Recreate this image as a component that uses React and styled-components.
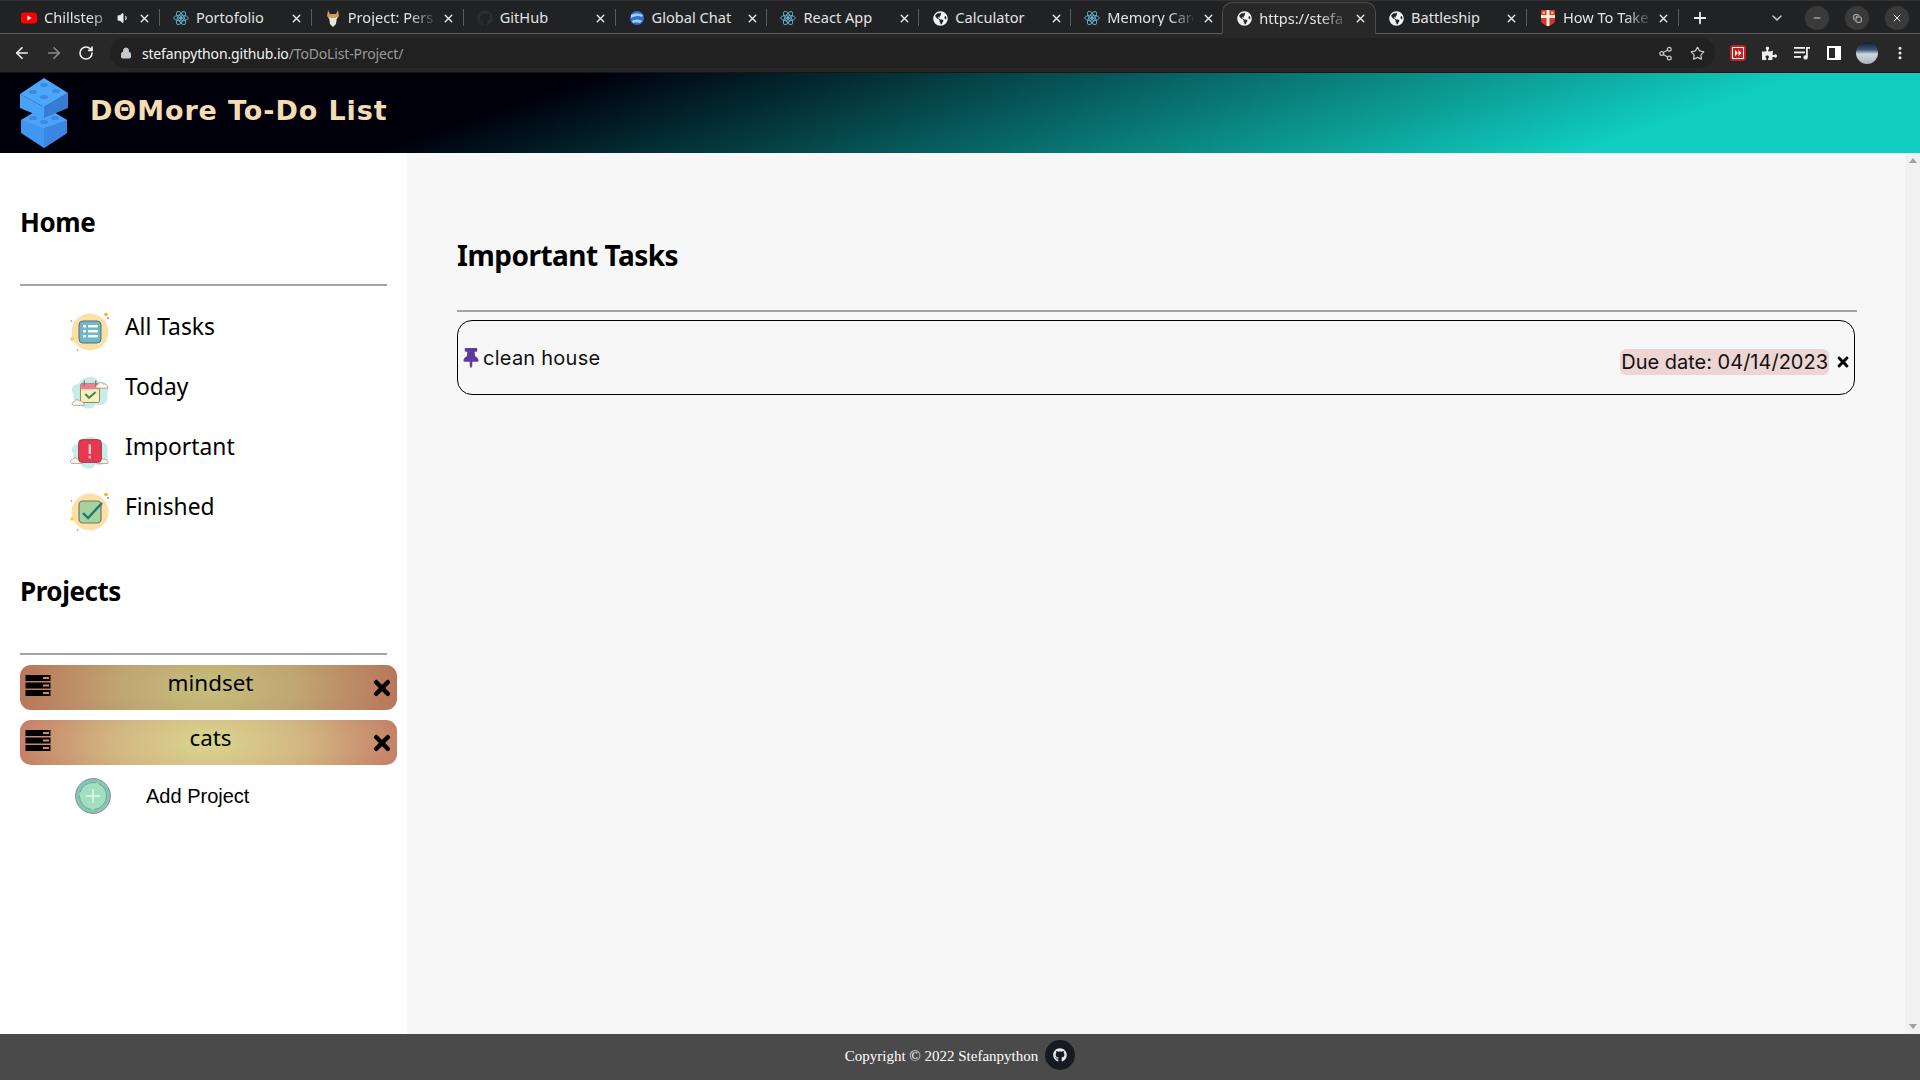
import React from "react";
import styled, { createGlobalStyle } from "styled-components";
import { ArrowLeft, ArrowRight, RotateCw, Lock, Share2, Star, MoreVertical, Minus, Plus, X, ChevronDown, Volume1, Copy } from "lucide-react";
import { FaTimes, FaThumbtack, FaGithub, FaGlobeAmericas, FaPuzzlePiece } from "react-icons/fa";

const Global = createGlobalStyle`
  html, body { margin: 0; padding: 0; height: 100%; overflow: hidden; }
  body { font-family: "Noto Sans", sans-serif; background: #fff; }
  #root { height: 100%; }
  * { box-sizing: border-box; }
`;

const Page = styled.div`
  width: 1920px; height: 1080px; display: flex; flex-direction: column;
`;
const TabStrip = styled.div`
  height: 34px; flex: none; display: flex; align-items: stretch; background: #212223;
  padding-left: 8px; padding-top: 2px; border-top: 1px solid #333; border-bottom: 1px solid #5b5b5b; color: #e4e4e4;
`;
const Tab = styled.div`
  width: 151.9px; position: relative; display: flex; align-items: center; padding: 0 7px 0 13px; gap: 7px;
  ${p => p.$active ? `
    background: #282828; border-radius: 9px 9px 0 0; margin-bottom: -1px;
    box-shadow: 0 0 0 1px #4c4c4c; clip-path: inset(-2px -2px 0 -2px);
  ` : `
    &::after { content: ""; position: absolute; right: 0; top: 6px; bottom: 7px; width: 1px; background: ${p.$noSep ? "transparent" : "#5c5c5c"}; }
  `}
`;
const Favicon = styled.span`
  width: 16px; height: 16px; flex: none; display: flex; align-items: center; justify-content: center;
`;
const TabTitle = styled.span`
  flex: 1; min-width: 0; white-space: nowrap; font: 14.6px/18px "Noto Sans", sans-serif; color: #e3e3e3; margin-bottom: 2px;
  ${p => p.$fade && `mask-image: linear-gradient(to right, #000 72%, rgba(0,0,0,0.15) 100%); width: min-content; flex: 1 1 auto;`}
`;
const TabClose = styled.span`
  width: 16px; height: 16px; flex: none; display: flex; align-items: center; justify-content: center; color: #eee;
`;
const StripRight = styled.div`
  flex: 1; display: flex; align-items: center; position: relative; color: #eee; padding: 0 11px 0 12px;
`;
const ChevronSlot = styled.span`
  display: flex; margin-left: auto; margin-right: 4px; color: #d8d8d8;
`;
const WinButton = styled.span`
  width: 24px; height: 24px; margin-left: 16px; border-radius: 50%; background: #3a3a3a; display: flex; align-items: center; justify-content: center; color: #eee;
`;
const Toolbar = styled.div`
  height: 39px; flex: none; background: #282828; display: flex; align-items: center; padding: 0 10px 0 12px; border-bottom: 1px solid #151515;
`;
const NavButton = styled.span`
  width: 20px; height: 20px; margin-right: 12px; display: flex; align-items: center; justify-content: center; color: ${p => p.$off ? "#8a8a8a" : "#f0f0f0"};
`;
const Omnibox = styled.div`
  margin-left: 2px; width: 1607px; height: 30px; border-radius: 15px; background: #212121; display: flex; align-items: center; padding: 0 10px 0 10px; color: #c8c8c8;
`;
const UrlText = styled.span`
  margin-left: 10px; font: 14px "Noto Sans", sans-serif; color: #f1f1f1; letter-spacing: -0.15px;
`;
const UrlPath = styled.span`
  color: #9a9a9a;
`;
const OmniActions = styled.span`
  margin-left: auto; display: flex; gap: 17px; color: #c6c6c6;
`;
const ExtTray = styled.div`
  display: flex; align-items: center; gap: 12px; margin-left: 13px; color: #eee;
`;
const ExtSlot = styled.span`
  width: 20px; height: 20px; display: flex; align-items: center; justify-content: center;
`;
const Avatar = styled.span`
  width: 22px; height: 22px; border-radius: 50%; background: linear-gradient(#131a2c 0%, #3c5578 35%, #cfd6de 55%, #aab2ba 100%);
`;
const AppHeader = styled.header`
  height: 80px; flex: none; display: flex; align-items: center; padding-left: 20px; gap: 22px;
  background: linear-gradient(161deg, #00000c 28%, #10cdc0 84%);
`;
const AppTitle = styled.h1`
  margin: 0 0 5px; font: bold 27px "DejaVu Sans", sans-serif; color: #f6dcb2; letter-spacing: 0.9px; white-space: nowrap;
`;
const Content = styled.div`
  flex: 1; min-height: 0; display: flex;
`;
const Sidebar = styled.aside`
  width: 407px; flex: none; background: #fff; padding-left: 20px; padding-right: 10px;
`;
const SectionTitle = styled.h2`
  margin: ${p => p.$top}px 0 44px; font: 700 26px/36px "Noto Sans", sans-serif; color: #000; letter-spacing: -0.45px;
`;
const Rule = styled.hr`
  margin: 0; border: 0; height: 2px; background: #a3a3a3; width: ${p => p.$w}px;
`;
const NavList = styled.div`
  display: flex; flex-direction: column; padding-top: 16px;
`;
const NavRow = styled.div`
  height: 60px; display: flex; align-items: center; padding-left: 50px; gap: 15px;
`;
const NavIcon = styled.span`
  width: 40px; height: 40px; flex: none; display: flex;
`;
const NavLabel = styled.span`
  font: 22.8px/32px "Noto Sans", sans-serif; color: #000; padding-bottom: 10px;
`;
const ProjectList = styled.div`
  display: flex; flex-direction: column; gap: 10px; margin-top: 10px;
`;
const ProjectCard = styled.div`
  height: 45px; position: relative; border-radius: 11px; display: flex; align-items: center; padding: 0 5px;
  background: ${p => p.$dark
    ? "radial-gradient(ellipse 52% 190% at 50% 50%, #c6c07c 0%, #c0a672 45%, #b8745a 100%)"
    : "radial-gradient(ellipse 52% 190% at 50% 50%, #dad68e 0%, #d2b581 50%, #c47e65 100%)"};
`;
const ProjectIcon = styled.span`
  width: 26px; height: 22px; flex: none; display: flex; margin-bottom: 3px;
`;
const ProjectName = styled.span`
  flex: 1; text-align: center; font: 22.4px/32px "Noto Sans", sans-serif; color: #000; padding-bottom: 9px;
`;
const ProjectDelete = styled.span`
  width: 24px; display: flex; justify-content: center; color: #000; font-size: 24px; margin-top: 1px; margin-right: -2px;
`;
const AddRow = styled.div`
  display: flex; align-items: center; padding-left: 55px; gap: 35px; margin-top: 13px;
`;
const AddLabel = styled.span`
  font: 20px "Liberation Sans", sans-serif; color: #000;
`;
const Main = styled.main`
  flex: 1; min-width: 0; background: #f7f7f7; padding: 0 48px 0 50px;
`;
const PageTitle = styled.h2`
  margin: 82px 0 35px; font: 700 28px/40px "Noto Sans", sans-serif; color: #000; letter-spacing: -0.5px;
`;
const TaskCard = styled.div`
  margin-top: 8px; width: 1398px; height: 75px; border: 1.5px solid #000; border-radius: 15px; display: flex; align-items: center; padding: 0 3px 0 3px;
`;
const TaskPin = styled.span`
  color: #5f3a9e; font-size: 20px; display: flex;
`;
const TaskName = styled.span`
  font: 20px "Inter", sans-serif; letter-spacing: 0.25px; color: #111; margin-left: 2px; margin-top: 1px;
`;
const DueDate = styled.span`
  margin-left: auto; height: 26px; padding: 0 1px; background: #ecd5d3; border-radius: 6px; font: 20px/26px "Inter", sans-serif; color: #111; margin-top: 8px;
`;
const TaskDelete = styled.span`
  display: flex; margin-left: 6px; color: #000; font-size: 16px; margin-top: 8px;
`;
const Scrollbar = styled.div`
  width: 15px; flex: none; background: #f1f1f1; display: flex; flex-direction: column; justify-content: space-between; align-items: center; padding: 5px 0;
`;
const ScrollArrow = styled.span`
  width: 0; height: 0; border-left: 4px solid transparent; border-right: 4px solid transparent;
  ${p => p.$down ? "border-top: 5px solid #a0a0a0;" : "border-bottom: 5px solid #a0a0a0;"}
`;
const Footer = styled.footer`
  height: 46px; flex: none; background: #4a4a4a; display: flex; align-items: center; justify-content: center; gap: 7px;
`;
const FooterText = styled.span`
  font: 15px "Liberation Serif", serif; color: #fff; margin-bottom: 1px;
`;
const FooterBadge = styled.span`
  width: 30px; height: 30px; border-radius: 50%; background: #161b22; color: #e8e8e8; display: flex; align-items: center; justify-content: center; margin-bottom: 5px;
`;

const ReactIcon = () => (
  <svg width="16" height="16" viewBox="0 0 16 16" fill="none" stroke="#5fb3c9" strokeWidth="0.9">
    <ellipse cx="8" cy="8" rx="7.3" ry="2.9" />
    <ellipse cx="8" cy="8" rx="7.3" ry="2.9" transform="rotate(60 8 8)" />
    <ellipse cx="8" cy="8" rx="7.3" ry="2.9" transform="rotate(120 8 8)" />
    <circle cx="8" cy="8" r="1.4" fill="#5fb3c9" />
  </svg>
);
const YoutubeIcon = () => (
  <svg width="16" height="16" viewBox="0 0 16 16">
    <rect x="0" y="2.5" width="16" height="11" rx="3" fill="#f00" />
    <path d="M6.4 5.6 10.6 8 6.4 10.4z" fill="#fff" />
  </svg>
);
const OdinIcon = () => (
  <svg width="16" height="18" viewBox="0 0 16 18">
    <path d="M3 1 5 5h6l2-4 1 6-2 3H4L2 7z" fill="#c99a5b" />
    <path d="M4 8h8l-1 7-3 3-3-3z" fill="#eee7d8" />
    <rect x="5" y="7" width="6" height="2" fill="#caa06a" />
  </svg>
);
const GithubDim = () => <FaGithub size={16} color="#2a2e33" />;
const GlobeChat = () => (
  <svg width="16" height="16" viewBox="0 0 16 16">
    <circle cx="8" cy="8" r="7" fill="#2e6fd0" />
    <path d="M2 5c3-2 8-2 12 0l-1 2C9 5 6 6 2 8zM3 11c3-2 7-2 10 0l-2 2c-3-1-5-1-7 0z" fill="#9fd0f5" />
  </svg>
);
const ShieldIcon = () => (
  <svg width="16" height="18" viewBox="0 0 16 18">
    <path d="M1 1h14v10c0 3-3 5-7 6-4-1-7-3-7-6z" fill="#d8352f" />
    <path d="M6.5 1h3v16h-3zM1 6h14v3H1z" fill="#f5efe2" />
    <rect x="2.5" y="2.5" width="2.5" height="2.5" fill="#f2c14e" />
    <rect x="11" y="2.5" width="2.5" height="2.5" fill="#f2c14e" />
  </svg>
);
const Globe = () => <FaGlobeAmericas size={15} color="#f1f1f1" />;

const TABS = [
  { title: "Chillstep |", icon: <YoutubeIcon />, audio: true, fade: true },
  { title: "Portofolio", icon: <ReactIcon /> },
  { title: "Project: Pers", icon: <OdinIcon />, fade: true },
  { title: "GitHub", icon: <GithubDim /> },
  { title: "Global Chat", icon: <GlobeChat /> },
  { title: "React App", icon: <ReactIcon /> },
  { title: "Calculator", icon: <Globe /> },
  { title: "Memory Card", icon: <ReactIcon />, fade: true },
  { title: "https://stefa", icon: <Globe />, fade: true, active: true },
  { title: "Battleship", icon: <Globe /> },
  { title: "How To Take", icon: <ShieldIcon />, fade: true },
];

const Logo = () => (
  <svg width="48" height="70" viewBox="20 78 48 70">
    <path d="M21 120 44 113 67 120 67 133 44 148 21 133z" fill="#3f97f2" />
    <path d="M44 128 67 120 67 133 44 148z" fill="#3a86e0" />
    <path d="M21 120 44 106 67 120 44 128z" fill="#4aa3f8" />
    <g fill="#3a8bdf"><ellipse cx="33" cy="118" rx="4" ry="2" /><ellipse cx="44" cy="112" rx="4" ry="2" /><ellipse cx="44" cy="122" rx="4" ry="2" /><ellipse cx="55" cy="118" rx="4" ry="2" /></g>
    <path d="M20 94 44 107 44 118 20 108z" fill="#48a2f8" />
    <path d="M44 107 68 93 68 108 44 118z" fill="#357ed4" />
    <path d="M20 94 44 78 68 93 44 107z" fill="#4ca6fb" />
    <g fill="#3a8bdf"><ellipse cx="33" cy="92" rx="4" ry="2" /><ellipse cx="44" cy="85" rx="4" ry="2" /><ellipse cx="44" cy="97" rx="4" ry="2" /><ellipse cx="56" cy="91" rx="4" ry="2" /></g>
  </svg>
);

const Sparkles = () => (
  <g>
    <circle cx="36" cy="2.5" r="1.8" fill="#f5b21e" />
    <circle cx="38" cy="6" r="0.9" fill="#f0527a" />
    <circle cx="2" cy="27" r="1.7" fill="#f9c93c" />
    <circle cx="1.5" cy="9" r="0.8" fill="#f0527a" />
    <circle cx="7.5" cy="38" r="0.8" fill="#f0527a" />
  </g>
);
const AllTasksIcon = () => (
  <svg width="40" height="40" viewBox="0 0 40 40">
    <circle cx="20" cy="20" r="18.5" fill="#fde0a6" />
    <Sparkles />
    <rect x="9" y="9" width="22" height="22" rx="4" fill="#6db8c9" stroke="#5a6c74" strokeWidth="1" />
    <g fill="#fff"><rect x="13" y="13" width="3" height="2.4" /><rect x="13" y="18" width="3" height="2.4" /><rect x="13" y="23" width="3" height="2.4" /><rect x="18" y="13" width="10" height="2.4" /><rect x="18" y="18" width="10" height="2.4" /><rect x="18" y="23" width="10" height="2.4" /></g>
  </svg>
);
const Cloud = ({ x, y }) => (
  <path d={`M${x} ${y}c-2 0-3-3 0-3.5 1-3 5-3 6-.8 2-.5 5 .5 4.8 4.3z`} fill="#fff6e8" stroke="#8d8a80" strokeWidth="0.7" />
);
const TodayIcon = () => (
  <svg width="41" height="40" viewBox="0 0 42 40">
    <path d="M4 22c-5-5 0-11 5-10 2-8 17-12 21-3 7-1 12 5 9 13 3 8-5 14-12 11-4 7-14 5-16-1-5 0-9-5-7-10z" fill="#c7ecea" />
    <rect x="11" y="11" width="20" height="20" rx="2" fill="#fbeeb6" stroke="#7d7560" strokeWidth="0.9" />
    <path d="M11 13a2 2 0 0 1 2-2h16a2 2 0 0 1 2 2v4H11z" fill="#ee7f91" />
    <path d="M15 8v6M27 8v6" stroke="#8d7a70" strokeWidth="1.5" />
    <path d="M16 22l4 4 7-6" fill="none" stroke="#3f8b6e" strokeWidth="2.2" />
    <Cloud x={4} y={34} />
    <Cloud x={29} y={16} />
  </svg>
);
const ImportantIcon = () => (
  <svg width="41" height="40" viewBox="0 0 42 40">
    <path d="M4 22c-5-5 0-11 5-10 2-8 17-12 21-3 7-1 12 5 9 13 3 8-5 14-12 11-4 7-14 5-16-1-5 0-9-5-7-10z" fill="#c7ecea" />
    <Cloud x={2} y={32} />
    <Cloud x={29} y={32} />
    <rect x="9" y="7" width="24" height="24" rx="4" fill="#e8384f" stroke="#8a3c48" strokeWidth="0.9" />
    <rect x="19.6" y="12" width="2.4" height="10" fill="#f7d7d7" />
    <rect x="19.6" y="24" width="2.4" height="2.6" fill="#f7d7d7" />
  </svg>
);
const FinishedIcon = () => (
  <svg width="40" height="40" viewBox="0 0 40 40">
    <circle cx="20" cy="20" r="18.5" fill="#fde0a6" />
    <Sparkles />
    <rect x="9" y="9" width="22" height="22" rx="4" fill="#a7d3a1" stroke="#6b7a66" strokeWidth="1.2" />
    <path d="M13 21l5 5 14-15" fill="none" stroke="#26776f" strokeWidth="2.4" />
  </svg>
);
const AddIcon = () => (
  <svg width="36" height="36" viewBox="0 0 36 36">
    <circle cx="18" cy="18" r="17.4" fill="#7fcbb0" stroke="#9a7ea8" strokeWidth="1" />
    <circle cx="18" cy="18" r="13.5" fill="#a0e0c0" stroke="#7a8fa0" strokeWidth="0.8" strokeDasharray="20 3" />
    <path d="M18 11v14M11 18h14" stroke="#e6f7e8" strokeWidth="1.6" />
  </svg>
);
const ServerIcon = () => (
  <svg width="26" height="21" viewBox="0 0 26 21">
    {[0, 7.5, 15].map(y => (
      <g key={y}>
        <rect x="0.5" y={y} width="25" height="6" fill="#000" />
        <rect x="18" y={y + 2} width="6" height="2" fill="#d08a6a" />
      </g>
    ))}
  </svg>
);

const ExtensionIcon = () => (
  <svg width="16" height="16" viewBox="0 0 16 16">
    <rect x="1" y="1" width="14" height="14" rx="2" fill="#fff" stroke="#c5221f" strokeWidth="2" />
    <rect x="3" y="3" width="10" height="10" fill="#c5221f" />
    <path d="M5 5l3 3-3 3zM8.5 5l3 3-3 3z" fill="#fff" />
  </svg>
);
const QueueIcon = () => (
  <svg width="18" height="16" viewBox="0 0 18 16" fill="#eee">
    <rect x="1" y="2" width="11" height="1.8" /><rect x="1" y="6.5" width="11" height="1.8" /><rect x="1" y="11" width="7" height="1.8" />
    <rect x="13" y="2" width="1.8" height="10" /><rect x="13" y="2" width="4" height="1.8" /><circle cx="12.6" cy="12.4" r="2.2" />
  </svg>
);
const SidePanelIcon = () => (
  <svg width="16" height="16" viewBox="0 0 16 16">
    <rect x="1" y="1" width="14" height="14" fill="#fff" />
    <rect x="3" y="3" width="6" height="10" fill="#282828" />
  </svg>
);

const NAV = [
  { label: "All Tasks", icon: <AllTasksIcon /> },
  { label: "Today", icon: <TodayIcon /> },
  { label: "Important", icon: <ImportantIcon /> },
  { label: "Finished", icon: <FinishedIcon /> },
];
const PROJECTS = [
  { name: "mindset", dark: true },
  { name: "cats" },
];

export default function App() {
  return (
    <Page>
      <Global />
      <TabStrip>
        {TABS.map((t, i) => (
          <Tab key={t.title} $active={t.active} $noSep={i === 7}>
            <Favicon>{t.icon}</Favicon>
            <TabTitle $fade={t.fade}>{t.title}</TabTitle>
            {t.audio && <Volume1 size={14} fill="#eee" />}
            <TabClose><X size={13} strokeWidth={2.6} /></TabClose>
          </Tab>
        ))}
        <StripRight>
          <Plus size={18} strokeWidth={2.4} />
          <ChevronSlot><ChevronDown size={16} /></ChevronSlot>
          <WinButton><Minus size={10} /></WinButton>
          <WinButton><Copy size={9} /></WinButton>
          <WinButton><X size={12} /></WinButton>
        </StripRight>
      </TabStrip>
      <Toolbar>
        <NavButton><ArrowLeft size={18} strokeWidth={2.2} /></NavButton>
        <NavButton $off><ArrowRight size={18} strokeWidth={2.2} /></NavButton>
        <NavButton><RotateCw size={16} strokeWidth={2.4} /></NavButton>
        <Omnibox>
          <Lock size={12} fill="#c8c8c8" />
          <UrlText>stefanpython.github.io<UrlPath>/ToDoList-Project/</UrlPath></UrlText>
          <OmniActions>
            <Share2 size={15} />
            <Star size={15} />
          </OmniActions>
        </Omnibox>
        <ExtTray>
          <ExtSlot><ExtensionIcon /></ExtSlot>
          <ExtSlot><FaPuzzlePiece size={15} /></ExtSlot>
          <ExtSlot><QueueIcon /></ExtSlot>
          <ExtSlot><SidePanelIcon /></ExtSlot>
          <Avatar />
          <ExtSlot><MoreVertical size={16} strokeWidth={2.6} /></ExtSlot>
        </ExtTray>
      </Toolbar>
      <AppHeader>
        <Logo />
        <AppTitle>DΘMore To-Do List</AppTitle>
      </AppHeader>
      <Content>
        <Sidebar>
          <SectionTitle $top={51}>Home</SectionTitle>
          <Rule $w={367} />
          <NavList>
            {NAV.map(n => (
              <NavRow key={n.label}>
                <NavIcon>{n.icon}</NavIcon>
                <NavLabel>{n.label}</NavLabel>
              </NavRow>
            ))}
          </NavList>
          <SectionTitle $top={31}>Projects</SectionTitle>
          <Rule $w={367} />
          <ProjectList>
            {PROJECTS.map(p => (
              <ProjectCard key={p.name} $dark={p.dark}>
                <ProjectIcon><ServerIcon /></ProjectIcon>
                <ProjectName>{p.name}</ProjectName>
                <ProjectDelete><FaTimes /></ProjectDelete>
              </ProjectCard>
            ))}
          </ProjectList>
          <AddRow>
            <AddIcon />
            <AddLabel>Add Project</AddLabel>
          </AddRow>
        </Sidebar>
        <Main>
          <PageTitle>Important Tasks</PageTitle>
          <Rule $w={1400} />
          <TaskCard>
            <TaskPin><FaThumbtack /></TaskPin>
            <TaskName>clean house</TaskName>
            <DueDate>Due date: 04/14/2023</DueDate>
            <TaskDelete><FaTimes /></TaskDelete>
          </TaskCard>
        </Main>
        <Scrollbar>
          <ScrollArrow />
          <ScrollArrow $down />
        </Scrollbar>
      </Content>
      <Footer>
        <FooterText>Copyright © 2022 Stefanpython</FooterText>
        <FooterBadge><FaGithub size={14} /></FooterBadge>
      </Footer>
    </Page>
  );
}
